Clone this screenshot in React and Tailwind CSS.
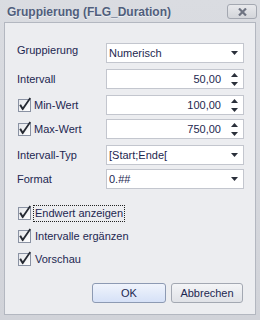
import React from "react";

const font = { fontFamily: '"Liberation Sans", Arial, sans-serif' };

function Check() {
  return (
    <svg width="13" height="13" viewBox="0 0 13 13" className="shrink-0 overflow-visible">
      <defs>
        <linearGradient id="cbg" x1="0" y1="0" x2="1" y2="1">
          <stop offset="0" stopColor="#e4e6ea" />
          <stop offset="1" stopColor="#ffffff" />
        </linearGradient>
      </defs>
      <rect x="0.5" y="0.5" width="12" height="12" fill="url(#cbg)" stroke="#8a92a3" />
      <path d="M1.3 6.2 L3 5.2 L4.8 8.3 L11.6 -1.4 L13 -0.6 L5 11.2 L4.3 11.2 Z" fill="#262a33" />
    </svg>
  );
}

function ComboArrow() {
  return (
    <svg width="7" height="4" viewBox="0 0 7 4" className="shrink-0">
      <path d="M0 0 H7 L3.5 4 Z" fill="#2a2f3a" />
    </svg>
  );
}

function Spinner() {
  return (
    <div className="flex flex-col items-center gap-[5px] shrink-0">
      <svg width="7" height="4" viewBox="0 0 7 4">
        <path d="M0 4 H7 L3.5 0 Z" fill="#2a2f3a" />
      </svg>
      <svg width="7" height="4" viewBox="0 0 7 4">
        <path d="M0 0 H7 L3.5 4 Z" fill="#2a2f3a" />
      </svg>
    </div>
  );
}

function Combo({ text }) {
  return (
    <div className="w-[138px] h-[20px] bg-white border border-[#c3c6ce] flex items-center pl-[2px] pr-[5px] text-[11px] text-[#1d2750]">
      <span className="flex-1">{text}</span>
      <ComboArrow />
    </div>
  );
}

function Spin({ value }) {
  return (
    <div className="w-[138px] h-[20px] bg-white border border-[#c3c6ce] flex items-center pr-[5px] text-[11px] text-[#1d2750]">
      <span className="flex-1 text-right pr-[10px]">{value}</span>
      <Spinner />
    </div>
  );
}

function Row({ mt, label, check, children, labelCls = "" }) {
  return (
    <div className={`flex items-center h-[20px] ${mt}`}>
      <div className={`w-[89px] flex items-center ${labelCls}`}>
        {check ? (
          <>
            <span className="ml-[1px] flex"><Check /></span>
            <span className="ml-[3px]">{label}</span>
          </>
        ) : (
          <span>{label}</span>
        )}
      </div>
      {children}
    </div>
  );
}

export default function App() {
  return (
    <div className="w-[260px] h-[320px] bg-gradient-to-b from-[#dadce1] to-[#d1d3d9] flex flex-col" style={font}>
      <div className="h-[22px] flex items-start justify-between pl-[7px] pr-[3px]">
        <span className="mt-[3px] text-[12px] font-bold text-[#505e7c] [text-shadow:0_1px_0_#eef0f3]">
          Gruppierung (FLG_Duration)
        </span>
        <div className="mt-[4px] w-[30px] h-[15px] rounded-[3px] border border-[#a4a8b1] bg-gradient-to-b from-[#e8e9ec] to-[#d3d5da] flex items-center justify-center">
          <svg width="9" height="8" viewBox="0 0 9 8">
            <path d="M1 0.5 L8 7.5 M8 0.5 L1 7.5" stroke="#6f7482" strokeWidth="2.2" />
          </svg>
        </div>
      </div>
      <div className="ml-[4px] w-[252px] h-[293px] bg-[#ecedf0] border border-[#b3b7c0] pl-[12px] pt-[20px] text-[11px] text-[#1d2750] flex flex-col">
        <Row mt="" label="Gruppierung" labelCls="pb-[6px]">
          <Combo text="Numerisch" />
        </Row>
        <Row mt="mt-[6px]" label="Intervall">
          <Spin value="50,00" />
        </Row>
        <Row mt="mt-[6px]" label="Min-Wert" check>
          <Spin value="100,00" />
        </Row>
        <Row mt="mt-[4px]" label="Max-Wert" check>
          <Spin value="750,00" />
        </Row>
        <Row mt="mt-[6px]" label="Intervall-Typ">
          <Combo text="[Start;Ende[" />
        </Row>
        <Row mt="mt-[4px]" label="Format">
          <Combo text="0.##" />
        </Row>

        <div className="mt-[16px] flex flex-col gap-[6px]">
          <div className="flex items-center h-[17px]">
            <span className="ml-[1px] flex"><Check /></span>
            <span className="ml-[2px] px-[1px] h-[17px] flex items-center border border-dotted border-[#222]">Endwert anzeigen</span>
          </div>
          <div className="flex items-center h-[17px]">
            <span className="ml-[1px] flex"><Check /></span>
            <span className="ml-[4px]">Intervalle ergänzen</span>
          </div>
          <div className="flex items-center h-[17px]">
            <span className="ml-[1px] flex"><Check /></span>
            <span className="ml-[4px]">Vorschau</span>
          </div>
        </div>

        <div className="mt-[15px] flex justify-end gap-[5px] pr-[12px]">
          <div className="w-[74px] h-[20px] rounded-[3px] border border-[#8d9ab3] bg-gradient-to-b from-[#f0f4fc] to-[#d6e1f7] flex items-center justify-center text-[#1d2750]">
            OK
          </div>
          <div className="w-[72px] h-[20px] rounded-[3px] border border-[#a3a8b2] bg-gradient-to-b from-[#f4f5f7] to-[#e0e2e7] flex items-center justify-center text-[#1d2750]">
            Abbrechen
          </div>
        </div>
      </div>
    </div>
  );
}
